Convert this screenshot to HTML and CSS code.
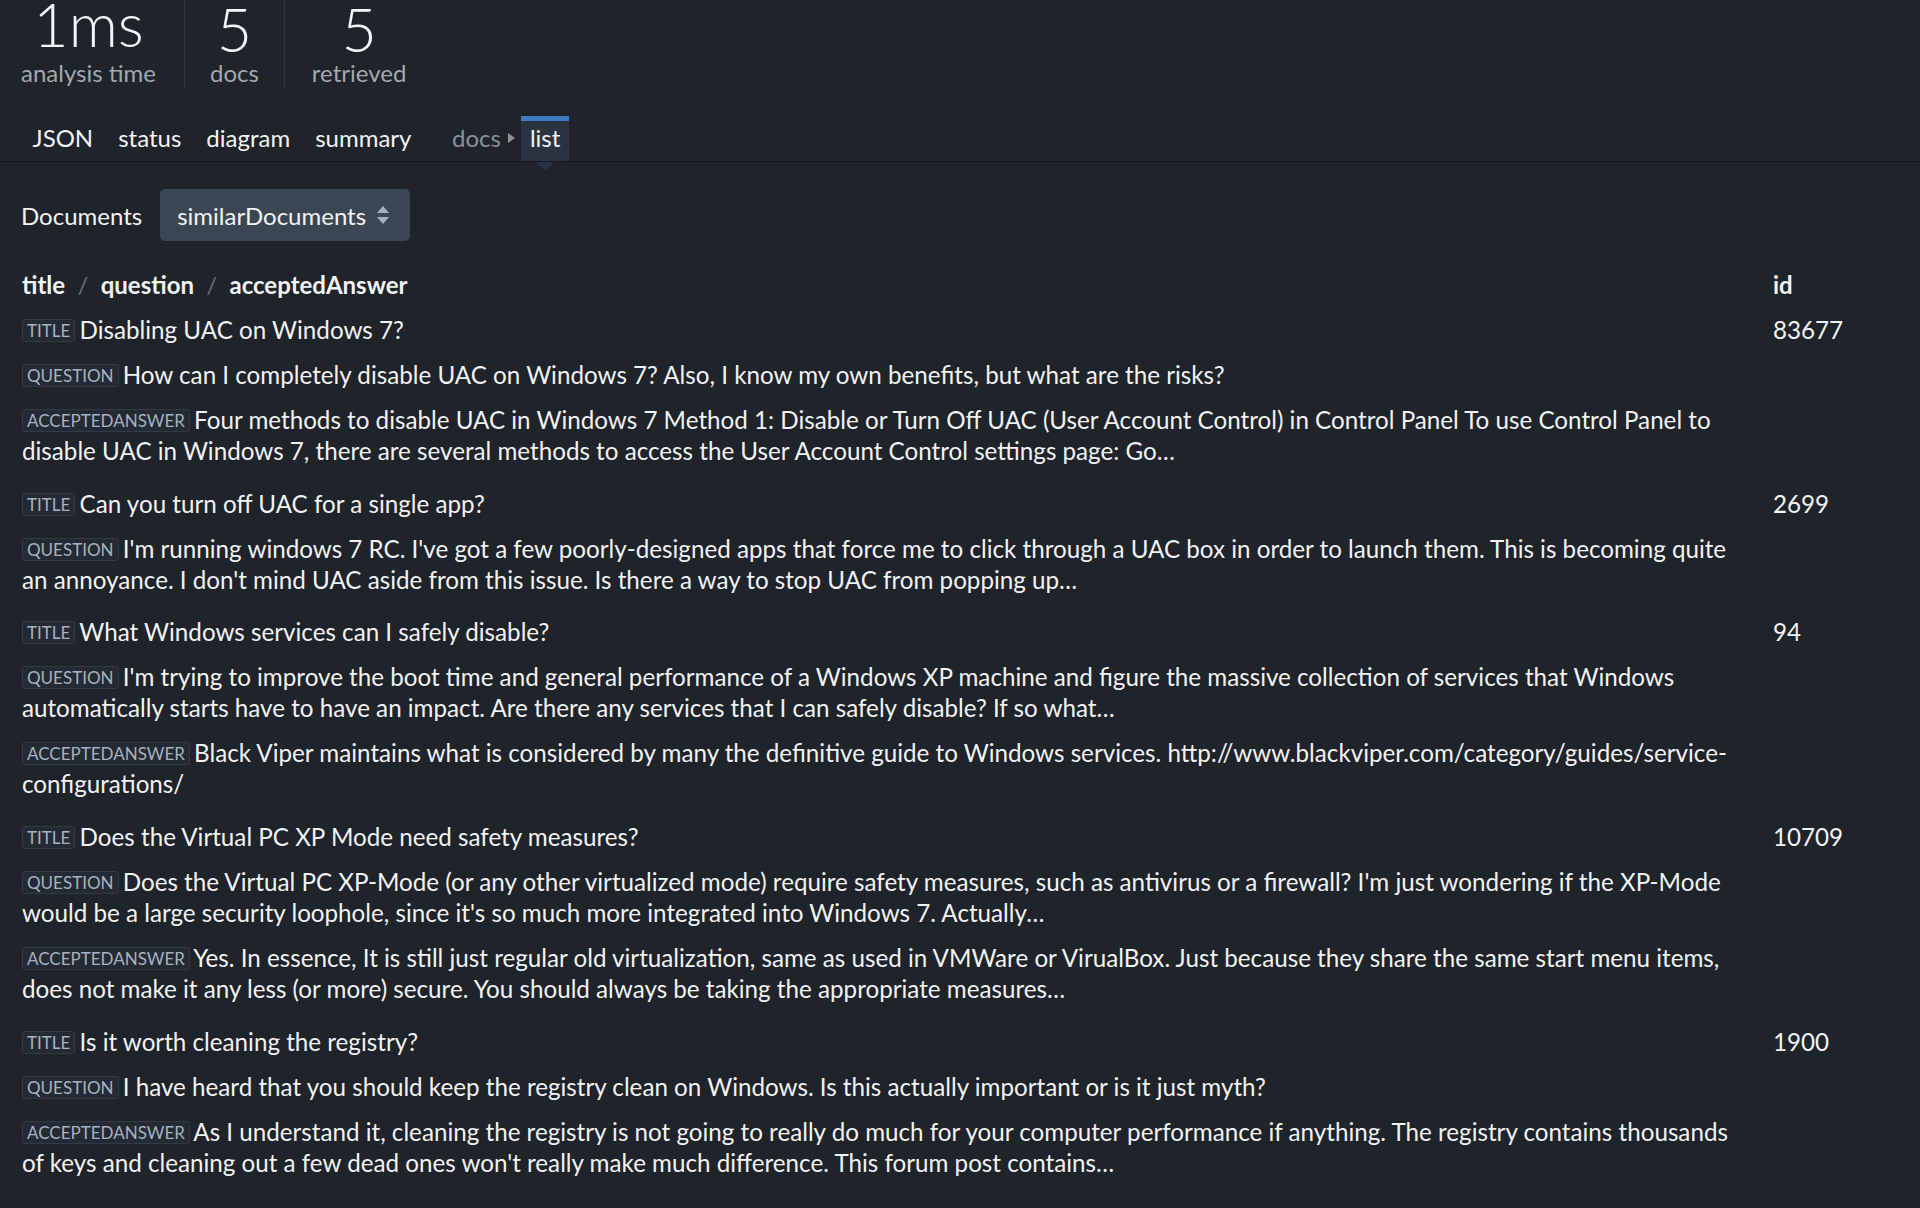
FILE: index.html
```html
<!DOCTYPE html>
<html lang="en">
<head>
<meta charset="utf-8">
<title>Documents</title>
<link rel="stylesheet" href="styles.css">
</head>
<body>
<div class="page">
  <div class="stats">
    <div class="stat first">
      <div class="value small">1ms</div>
      <div class="label">analysis time</div>
    </div>
    <div class="stat">
      <div class="value">5</div>
      <div class="label">docs</div>
    </div>
    <div class="stat">
      <div class="value">5</div>
      <div class="label">retrieved</div>
    </div>
  </div>

  <div class="tabs">
    <span class="tab">JSON</span>
    <span class="tab">status</span>
    <span class="tab">diagram</span>
    <span class="tab">summary</span>
    <span class="crumb">docs<span class="crumb-arrow"></span></span>
    <span class="tab active">list</span>
  </div>

  <div class="toolbar">
    <span class="toolbar-label">Documents</span>
    <span class="select">similarDocuments
      <svg class="select-icon" width="14" height="20" viewBox="0 0 14 20"><path d="M7 1 L13 8 H1 Z" fill="#a7b1bd"/><path d="M7 19 L13 12 H1 Z" fill="#a7b1bd"/></svg>
    </span>
  </div>

  <div class="table">
    <div class="head main-col">title <span class="sep">/</span> question <span class="sep">/</span> acceptedAnswer</div>
    <div class="head id-col">id</div>

    <div class="doc main-col">
      <div class="field"><span class="badge">title</span> Disabling UAC on Windows 7?</div>
      <div class="field"><span class="badge">question</span> How can I completely disable UAC on Windows 7? Also, I know my own benefits, but what are the risks?</div>
      <div class="field"><span class="badge">acceptedAnswer</span> Four methods to disable UAC in Windows 7 Method 1: Disable or Turn Off UAC (User Account Control) in Control Panel To use Control Panel to disable UAC in Windows 7, there are several methods to access the User Account Control settings page: Go…</div>
    </div>
    <div class="doc id-col">83677</div>

    <div class="doc main-col">
      <div class="field"><span class="badge">title</span> Can you turn off UAC for a single app?</div>
      <div class="field"><span class="badge">question</span> I'm running windows 7 RC. I've got a few poorly-designed apps that force me to click through a UAC box in order to launch them. This is becoming quite an annoyance. I don't mind UAC aside from this issue. Is there a way to stop UAC from popping up…</div>
    </div>
    <div class="doc id-col">2699</div>

    <div class="doc main-col">
      <div class="field"><span class="badge">title</span> What Windows services can I safely disable?</div>
      <div class="field"><span class="badge">question</span> I'm trying to improve the boot time and general performance of a Windows XP machine and figure the massive collection of services that Windows automatically starts have to have an impact. Are there any services that I can safely disable? If so what…</div>
      <div class="field"><span class="badge">acceptedAnswer</span> Black Viper maintains what is considered by many the definitive guide to Windows services. http://www.blackviper.com/category/guides/service-configurations/</div>
    </div>
    <div class="doc id-col">94</div>

    <div class="doc main-col">
      <div class="field"><span class="badge">title</span> Does the Virtual PC XP Mode need safety measures?</div>
      <div class="field"><span class="badge">question</span> Does the Virtual PC XP-Mode (or any other virtualized mode) require safety measures, such as antivirus or a firewall? I'm just wondering if the XP-Mode would be a large security loophole, since it's so much more integrated into Windows 7. Actually…</div>
      <div class="field"><span class="badge">acceptedAnswer</span> Yes. In essence, It is still just regular old virtualization, same as used in VMWare or VirualBox. Just because they share the same start menu items, does not make it any less (or more) secure. You should always be taking the appropriate measures…</div>
    </div>
    <div class="doc id-col">10709</div>

    <div class="doc main-col">
      <div class="field"><span class="badge">title</span> Is it worth cleaning the registry?</div>
      <div class="field"><span class="badge">question</span> I have heard that you should keep the registry clean on Windows. Is this actually important or is it just myth?</div>
      <div class="field"><span class="badge">acceptedAnswer</span> As I understand it, cleaning the registry is not going to really do much for your computer performance if anything. The registry contains thousands of keys and cleaning out a few dead ones won't really make much difference. This forum post contains…</div>
    </div>
    <div class="doc id-col">1900</div>
  </div>
</div>
</body>
</html>
```

FILE: styles.css
```css
html, body {
  margin: 0;
  padding: 0;
  background: #1f232a;
  overflow: hidden;
}
body {
  font-family: Lato, "Noto Sans", sans-serif;
  color: #f1f2f3;
  font-size: 24px;
}
.page {
  width: 1920px;
  height: 1208px;
}

/* stats */
.stats {
  display: flex;
  height: 87px;
}
.stat {
  display: flex;
  flex-direction: column;
  align-items: center;
  padding: 0 25px;
  border-right: 1px solid #2f353e;
}
.stat:last-child { border-right: none; padding-left: 27px; }
.stat.first { padding-left: 21px; padding-right: 28px; }
.value {
  font-size: 61px;
  font-weight: 300;
  line-height: 58px;
  height: 58px;
  color: #f4f5f6;
}
.value.small {
  font-size: 61px;
  line-height: 47px;
}
.label {
  font-size: 24px;
  line-height: 28px;
  color: #a2a8b0;
  margin-top: 1px;
}

/* tabs */
.tabs {
  display: flex;
  align-items: stretch;
  margin-top: 29px;
  height: 45px;
  padding-left: 20px;
  border-bottom: 1px solid #14171c;
}
.tab {
  position: relative;
  display: flex;
  align-items: center;
  padding: 0 12.5px 7px;
  font-size: 24px;
  color: #f1f2f3;
  border-top: 5px solid transparent;
}
.tab.active {
  background: #2b3340;
  border-top-color: #3f7cc4;
  padding: 0 9px 7px;
}
.tab.active::after {
  content: "";
  position: absolute;
  left: 50%;
  bottom: -10px;
  margin-left: -9px;
  border-left: 9px solid transparent;
  border-right: 9px solid transparent;
  border-top: 9px solid #2b3340;
}
.crumb {
  display: flex;
  align-items: center;
  margin-left: 28px;
  padding-bottom: 2px;
  color: #8a919a;
  font-size: 24px;
}
.crumb-arrow {
  display: inline-block;
  margin: 0 6px 0 7px;
  border-top: 5px solid transparent;
  border-bottom: 5px solid transparent;
  border-left: 7px solid #8a919a;
}

/* toolbar */
.toolbar {
  display: flex;
  align-items: center;
  padding-left: 21px;
  margin-top: 27px;
}
.toolbar-label {
  font-size: 24px;
  margin-right: 18px;
}
.select {
  display: inline-flex;
  align-items: center;
  height: 52px;
  box-sizing: border-box;
  padding: 0 20px 0 17px;
  background: #3b4654;
  border-radius: 5px;
  font-size: 24px;
  color: #f1f2f3;
}
.select-icon { margin-left: 10px; }

/* table */
.table {
  display: grid;
  grid-template-columns: minmax(0, 1fr) 147px;
  column-gap: 23px;
  padding-left: 22px;
  margin-top: 28px;
  line-height: 31px;
  font-size: 24.2px;
}
.head {
  font-weight: 700;
  font-size: 24px;
  margin-bottom: 14px;
}
.sep {
  color: #656c75;
  font-weight: 400;
  margin: 0 6.5px;
}
.doc { margin-bottom: 21.7px; }
.field { margin-bottom: 14px; }
.field:last-child { margin-bottom: 0; }
.badge {
  display: inline-block;
  font-size: 17px;
  line-height: 21px;
  text-transform: uppercase;
  color: #a6b2c0;
  background: #242a33;
  border: 1px solid #323a45;
  border-radius: 3px;
  padding: 0 4px;
  margin-right: -2px;
  vertical-align: 2px;
}
```
